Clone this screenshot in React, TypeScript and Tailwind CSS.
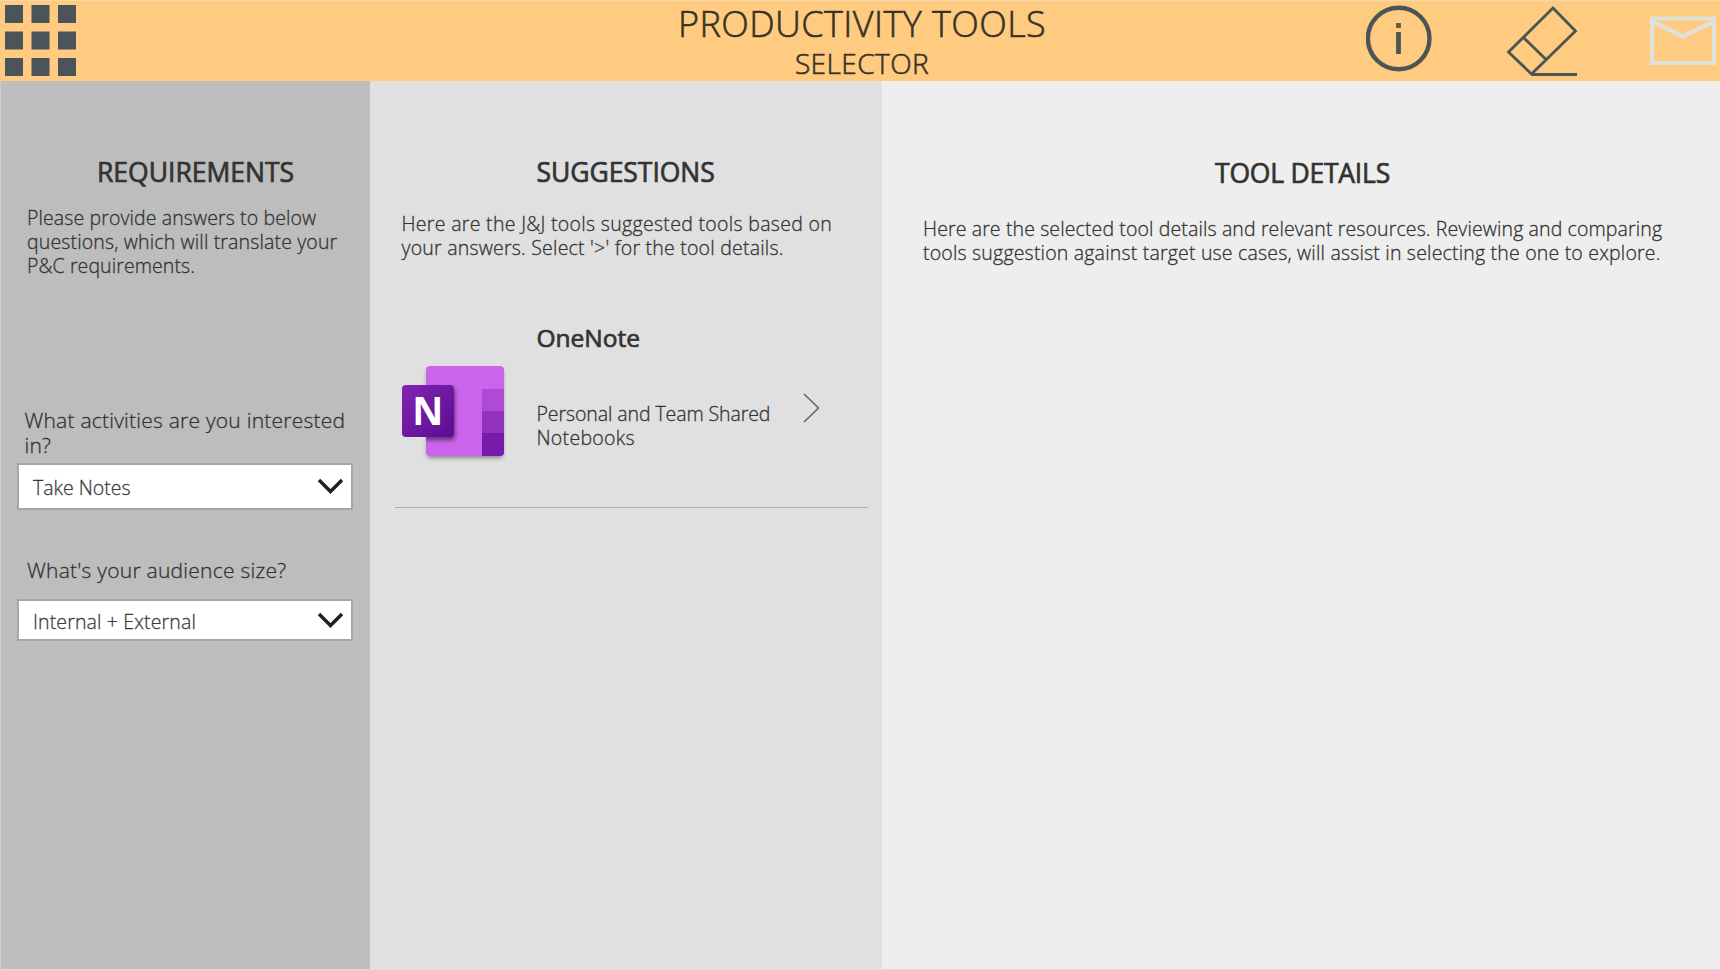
import React from "react";

function WaffleIcon() {
  const cells = [0, 26.5, 53];
  return (
    <svg width="71" height="71" viewBox="0 0 71 71" fill="#4a5459">
      {cells.map((y) => cells.map((x) => <rect key={`${x}-${y}`} x={x} y={y} width="18" height="18" />))}
    </svg>
  );
}

function InfoIcon() {
  return (
    <svg width="66" height="67" viewBox="0 0 66 67" fill="none" stroke="#4b5555">
      <circle cx="32.700" cy="33.500" r="30.800" strokeWidth="4.400" />
      <path d="M32.500 27v22" strokeWidth="4.800" />
      <path d="M32.500 18v5" strokeWidth="4.800" stroke="#6b5744" />
    </svg>
  );
}

function EraserIcon() {
  return (
    <svg width="72" height="72" viewBox="0 0 72 72" fill="none" stroke="#4b5555" strokeWidth="2.8">
      <path d="M47 3 69.5 26 25.500 69 2.500 47Z" />
      <path d="M17.500 32.500 39.500 54" />
      <path d="M25 69.500h46" />
    </svg>
  );
}

function MailIcon() {
  return (
    <svg width="66" height="50" viewBox="0 0 66 50" fill="none" stroke="#e0e0dc" strokeWidth="4.200">
      <path d="M2.100 2.500h61.800v44.500H2.100z" />
      <path d="M3 6 33 20.500 63 6" />
    </svg>
  );
}

function OneNoteIcon() {
  return (
    <svg width="104" height="96" viewBox="0 0 104 96">
      <defs>
        <linearGradient id="badge" x1="0" y1="0" x2="1" y2="1">
          <stop offset="0" stopColor="#8324b3" />
          <stop offset="1" stopColor="#5a0d91" />
        </linearGradient>
        <clipPath id="book">
          <rect x="24" y="0" width="78" height="90" rx="4" />
        </clipPath>
        <filter id="shade" x="-20%" y="-20%" width="140%" height="150%">
          <feGaussianBlur stdDeviation="2" />
        </filter>
      </defs>
      <rect x="25" y="3" width="76" height="89" rx="4" fill="#000" opacity="0.4" filter="url(#shade)" />
      <g clipPath="url(#book)">
        <rect x="24" width="78" height="90" fill="#ca64ea" />
        <rect x="80" y="23" width="22" height="22" fill="#ae4bd5" />
        <rect x="80" y="45" width="22" height="22" fill="#9332bf" />
        <rect x="80" y="67" width="22" height="23" fill="#7719aa" />
        <rect x="2" y="22" width="51" height="52" rx="4" fill="#000" opacity="0.5" filter="url(#shade)" />
      </g>
      <rect y="19" width="52" height="52" rx="4" fill="url(#badge)" />
      <text x="25.800" y="59" textAnchor="middle" fontFamily="'Open Sans', sans-serif" fontWeight="700" fontSize="39" fill="#fff" textLength="31" lengthAdjust="spacingAndGlyphs">N</text>
    </svg>
  );
}

function Select({ value, className, tracking }: { value: string; className: string; tracking: string }) {
  return (
    <button className={`flex w-[336px] items-center justify-between border-2 border-[#a6a6a6] bg-white pl-3.5 pr-[7px] ${className}`}>
      <span className={`text-[19.5px] leading-6 text-[#3c3c3c] ${tracking}`}>{value}</span>
      <svg className="mb-0.5" width="27" height="18" viewBox="0 0 27 18" fill="none" stroke="#1f1f1f" strokeWidth="3.4">
        <path d="m2 2 11.500 11.500L25 2" />
      </svg>
    </button>
  );
}

export default function App() {
  return (
    <div className="flex h-[970px] w-[1720px] flex-col overflow-hidden bg-[#eeeeee] font-['Open_Sans',sans-serif] font-light text-[#333333] [-webkit-text-stroke:0.3px]">
      <header className="flex h-[81px] shrink-0 items-start border-t border-[#f5d9ac] bg-[#ffcb80]">
        <div className="w-[680px] pl-[5px] pt-1">
          <WaffleIcon />
        </div>
        <div className="flex w-[364px] flex-col items-center whitespace-nowrap text-[#3a3226] [-webkit-text-stroke:0.6px]">
          <h1 className="mt-[3px] text-[36px] leading-10 tracking-[0.42px]">PRODUCTIVITY TOOLS</h1>
          <h2 className="text-[28px] leading-[38px] tracking-[0.45px]">SELECTOR</h2>
        </div>
        <div className="flex pl-[322px]">
          <div className="mt-1"><InfoIcon /></div>
          <div className="ml-[74px] mt-1"><EraserIcon /></div>
          <div className="ml-[72px] mt-[15px]"><MailIcon /></div>
        </div>
      </header>

      <main className="flex grow">
        <section className="w-[370px] border-l border-[#cccccc] bg-[#bdbdbd]">
          <h3 className="pl-[96px] pt-[73px] text-[26.500px] font-normal leading-9 [-webkit-text-stroke:0.7px]">REQUIREMENTS</h3>
          <p className="mt-4 whitespace-nowrap pl-[26px] text-[19.5px] leading-6">
            <span className="block tracking-[0.11px]">Please provide answers to below</span>
            <span className="block tracking-[0.15px]">questions, which will translate your</span>
            <span className="block tracking-[0.1px]">P&amp;C requirements.</span>
          </p>
          <p className="mt-[130px] whitespace-nowrap pl-[23.500px] text-[21px] leading-[25px] tracking-[0.23px]">
            What activities are you interested<br />in?
          </p>
          <div className="pl-4 pt-[5px]"><Select value="Take Notes" className="h-[47px] pt-0.5" tracking="tracking-normal" /></div>
          <p className="mt-[48px] whitespace-nowrap pl-[26px] text-[21px] leading-[25px] tracking-[0.25px]">What's your audience size?</p>
          <div className="pl-4 pt-[16px]"><Select value="Internal + External" className="h-[42px] pt-[3px]" tracking="tracking-[0.14px]" /></div>
        </section>

        <section className="w-[512px] bg-[#e0e0e0]">
          <h3 className="pl-[166.500px] pt-[73px] text-[26.500px] font-normal leading-9 tracking-[-0.05px] [-webkit-text-stroke:0.7px]">SUGGESTIONS</h3>
          <p className="mt-[22px] whitespace-nowrap pl-[31.500px] text-[19.5px] leading-6">
            <span className="block tracking-[0.31px]">Here are the J&amp;J tools suggested tools based on</span>
            <span className="block tracking-[0.22px]">your answers. Select '&gt;' for the tool details.</span>
          </p>
          <article className="ml-[25px] mt-[60px] flex h-[188px] w-[473px] border-b border-[#adadad] pl-[7px]">
            <div className="w-[134.500px] pt-[46px]"><OneNoteIcon /></div>
            <div className="w-[266.500px] whitespace-nowrap">
              <h4 className="text-[24.500px] font-normal leading-9 [-webkit-text-stroke:0.7px]">OneNote</h4>
              <p className="mt-[46px] text-[19.5px] leading-6">
                <span className="block tracking-[-0.09px]">Personal and Team Shared</span>
                <span className="block tracking-[0.3px]">Notebooks</span>
              </p>
            </div>
            <svg className="mt-[73px]" width="18" height="30" viewBox="0 0 18 30" fill="none" stroke="#5f6b70" strokeWidth="1.6">
              <path d="M1 1 15.500 15 1 29" />
            </svg>
          </article>
        </section>

        <section className="w-[838px] bg-[#eeeeee]">
          <h3 className="pl-[333px] pt-[74px] text-[26.500px] font-normal leading-9 tracking-[-0.22px] [-webkit-text-stroke:0.7px]">TOOL DETAILS</h3>
          <p className="mt-[26px] whitespace-nowrap pl-[41px] text-[19.5px] leading-6">
            <span className="block tracking-[0.12px]">Here are the selected tool details and relevant resources. Reviewing and comparing</span>
            <span className="block tracking-[0.19px]">tools suggestion against target use cases, will assist in selecting the one to explore.</span>
          </p>
        </section>
      </main>
      <div className="h-px shrink-0 bg-[#dddddd]" />
    </div>
  );
}
